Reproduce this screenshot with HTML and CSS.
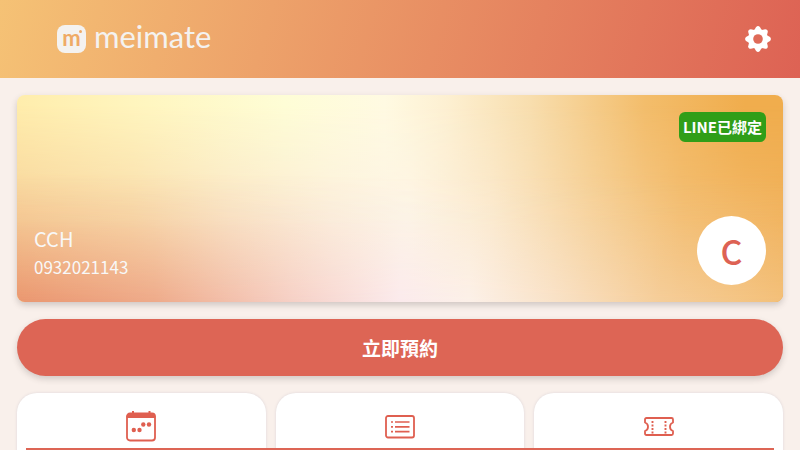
FILE: index.html
```html
<!DOCTYPE html>
<html lang="zh-Hant">
<head>
<meta charset="utf-8">
<meta name="viewport" content="width=device-width, initial-scale=1">
<title>meimate</title>
<link rel="stylesheet" href="styles.css">
</head>
<body>
<header class="topbar">
  <a class="brand" href="#">
    <span class="mark">m</span>
    <span class="wordmark">meimate</span>
  </a>
  <button class="settings" type="button" aria-label="設定">
    <svg viewBox="0 0 26 26" width="26" height="26" aria-hidden="true">
      <g fill="#fff">
        <circle cx="13" cy="13" r="10"/>
        <g id="teeth">
          <path id="tooth" d="M8.8 5 11.1 1Q13-.8 14.9 1L17.2 5Z"/>
          <use href="#tooth" transform="rotate(90 13 13)"/>
          <use href="#tooth" transform="rotate(180 13 13)"/>
          <use href="#tooth" transform="rotate(270 13 13)"/>
        </g>
        <use href="#teeth" transform="rotate(45 13 13)"/>
      </g>
      <circle cx="13" cy="13" r="4.8" fill="#df6a58"/>
    </svg>
  </button>
</header>
<main class="content">
  <section class="member">
    <span class="badge">LINE已綁定</span>
    <div class="member-row">
      <div class="identity">
        <p class="name">CCH</p>
        <p class="phone">0932021143</p>
      </div>
      <div class="avatar">C</div>
    </div>
  </section>
  <button class="book" type="button">立即預約</button>
  <nav class="tiles">
    <a class="tile" href="#" aria-label="預約">
      <svg viewBox="0 1 32 32" width="32" height="32" fill="none" stroke="#df5f50" aria-hidden="true">
        <rect x="2" y="3.500" width="28" height="27" rx="3" stroke-width="1.800"/>
        <path d="M2 7.500V6.500Q2 3.500 5 3.500H27Q30 3.500 30 6.500V7.500Z" fill="#df5f50"/>
        <path d="M8 1V4M24.500 1V4" stroke-width="2"/>
        <g fill="#df5f50" stroke="none"><circle cx="8.800" cy="20" r="2.200"/><circle cx="14.500" cy="20" r="2.200"/><circle cx="18.300" cy="14.500" r="2.200"/><circle cx="24" cy="14.500" r="2.200"/></g>
      </svg>
    </a>
    <a class="tile" href="#" aria-label="紀錄">
      <svg viewBox="0 0 32 32" width="32" height="32" fill="none" stroke="#df5f50" aria-hidden="true">
        <rect x="2" y="5" width="28" height="21.500" rx="2" stroke-width="1.800"/>
        <path d="M11 11H25.500M11 15.800H25.500M11 20.600H25.500M7 11H9M7 15.800H9M7 20.600H9" stroke-width="1.700"/>
      </svg>
    </a>
    <a class="tile" href="#" aria-label="票券">
      <svg viewBox="0 0 32 32" width="32" height="32" fill="none" stroke="#df5f50" aria-hidden="true">
        <path d="M3.500 7H28.500Q30 7 30 8.500V11.500A4.500 4.500 0 0 0 30 20V22.500Q30 24 28.500 24H3.500Q2 24 2 22.500V20A4.500 4.500 0 0 0 2 11.500V8.500Q2 7 3.500 7Z" stroke-width="1.800" stroke-linejoin="round"/>
        <path d="M9.500 10V22.500M22.500 10V22.500" stroke-width="1.900" stroke-dasharray="1.900 1.600"/>
      </svg>
    </a>
  </nav>
</main>
<div class="bottom-bar"></div>
</body>
</html>
```
FILE: styles.css
```css
* {
  box-sizing: border-box;
}

body {
  margin: 0;
  min-height: 100vh;
  overflow: hidden;
  background: #f9f0eb;
  font-family: "Noto Sans CJK TC", sans-serif;
}

.topbar {
  display: flex;
  align-items: center;
  justify-content: space-between;
  height: 78px;
  padding: 0 29px 0 57px;
  background: linear-gradient(105deg, #f5c275, #dd6254);
}

.brand {
  display: flex;
  align-items: center;
  gap: 8px;
  color: #f4f2f0;
  text-decoration: none;
}

.mark {
  position: relative;
  width: 29px;
  height: 28px;
  border-radius: 8px;
  background: #f4f2f0;
  color: #efaa66;
  font: 700 22px/26px "Lato", sans-serif;
  text-align: center;
}

.mark::after {
  content: "";
  position: absolute;
  top: 5px;
  right: 4px;
  width: 3px;
  height: 3px;
  border-radius: 50%;
  background: #efaa66;
}

.wordmark {
  padding-bottom: 6px;
  font: 400 31px/32px "Lato", sans-serif;
}

.settings {
  display: flex;
  padding: 0;
  border: 0;
  background: none;
}

.content {
  display: flex;
  flex-direction: column;
  gap: 17px;
  padding: 17px;
}

.member {
  position: relative;
  isolation: isolate;
  display: flex;
  flex-direction: column;
  justify-content: space-between;
  min-height: 207px;
  padding: 17px;
  overflow: hidden;
  border-radius: 8px;
  background: linear-gradient(90deg, #ffedac, #fff6c0 17%, #fefdd6 35%, #fffae2 48%, #fdf0d2 56%, #f8deae 67%, #f3bd6b 82%, #f0ad4d 95%);
  box-shadow: 0 3px 6px rgba(60, 50, 50, 0.22);
}

.member::before,
.member::after {
  content: "";
  position: absolute;
  inset: 0;
  z-index: -1;
}

.member::before {
  background: linear-gradient(90deg, #f7d39c, #f9dcab 15%, #fae7c8 28%, #fcf0dc 41%, #fdf5e5 51%, #fbe9cc 62%, #f6d29b 75%, #f3bd70 87%, #f1b25c);
  mask-image: linear-gradient(180deg, transparent 5%, rgba(0, 0, 0, 0.5) 32%, rgba(0, 0, 0, 0.9) 55%, #000 65%);
}

.member::after {
  background: linear-gradient(90deg, #ea966f, #eeaa8a 18%, #f6d0c6 36%, #fbeaec 50%, #fcf0e8 59%, #f9e2c8 70%, #f5cd99 84%, #f3c07a);
  mask-image: linear-gradient(180deg, transparent 38%, rgba(0, 0, 0, 0.2) 60%, #000);
}

.badge {
  align-self: flex-end;
  padding: 0 4px;
  border-radius: 6px;
  background: #309e18;
  color: #fff;
  font-size: 15px;
  font-weight: 700;
  line-height: 30px;
}

.member-row {
  display: flex;
  align-items: flex-end;
  justify-content: space-between;
}

.identity {
  padding-bottom: 4px;
  color: #f8f8f8;
  line-height: 28px;
}

.name,
.phone {
  margin: 0;
}

.name {
  font-size: 20px;
}

.phone {
  font-size: 17px;
}

.avatar {
  width: 69px;
  height: 69px;
  border-radius: 50%;
  background: #fff;
  color: #dd6254;
  font-size: 34px;
  font-weight: 500;
  line-height: 70px;
  text-align: center;
}

.book {
  height: 57px;
  padding: 0;
  border: 0;
  border-radius: 29px;
  background: #dd6555;
  box-shadow: 0 3px 6px rgba(60, 50, 50, 0.2);
  color: #fff;
  font: 700 19px/57px "Noto Sans CJK TC", sans-serif;
}

.tiles {
  display: grid;
  grid-template-columns: repeat(3, 1fr);
  gap: 10px;
}

.tile {
  display: flex;
  justify-content: center;
  min-height: 120px;
  padding-top: 18px;
  border-radius: 20px;
  background: #fff;
  box-shadow: 0 0 3px rgba(80, 90, 130, 0.16);
}

.bottom-bar {
  position: fixed;
  right: 26px;
  bottom: 0;
  left: 26px;
  height: 2px;
  background: #dd6555;
}
```
